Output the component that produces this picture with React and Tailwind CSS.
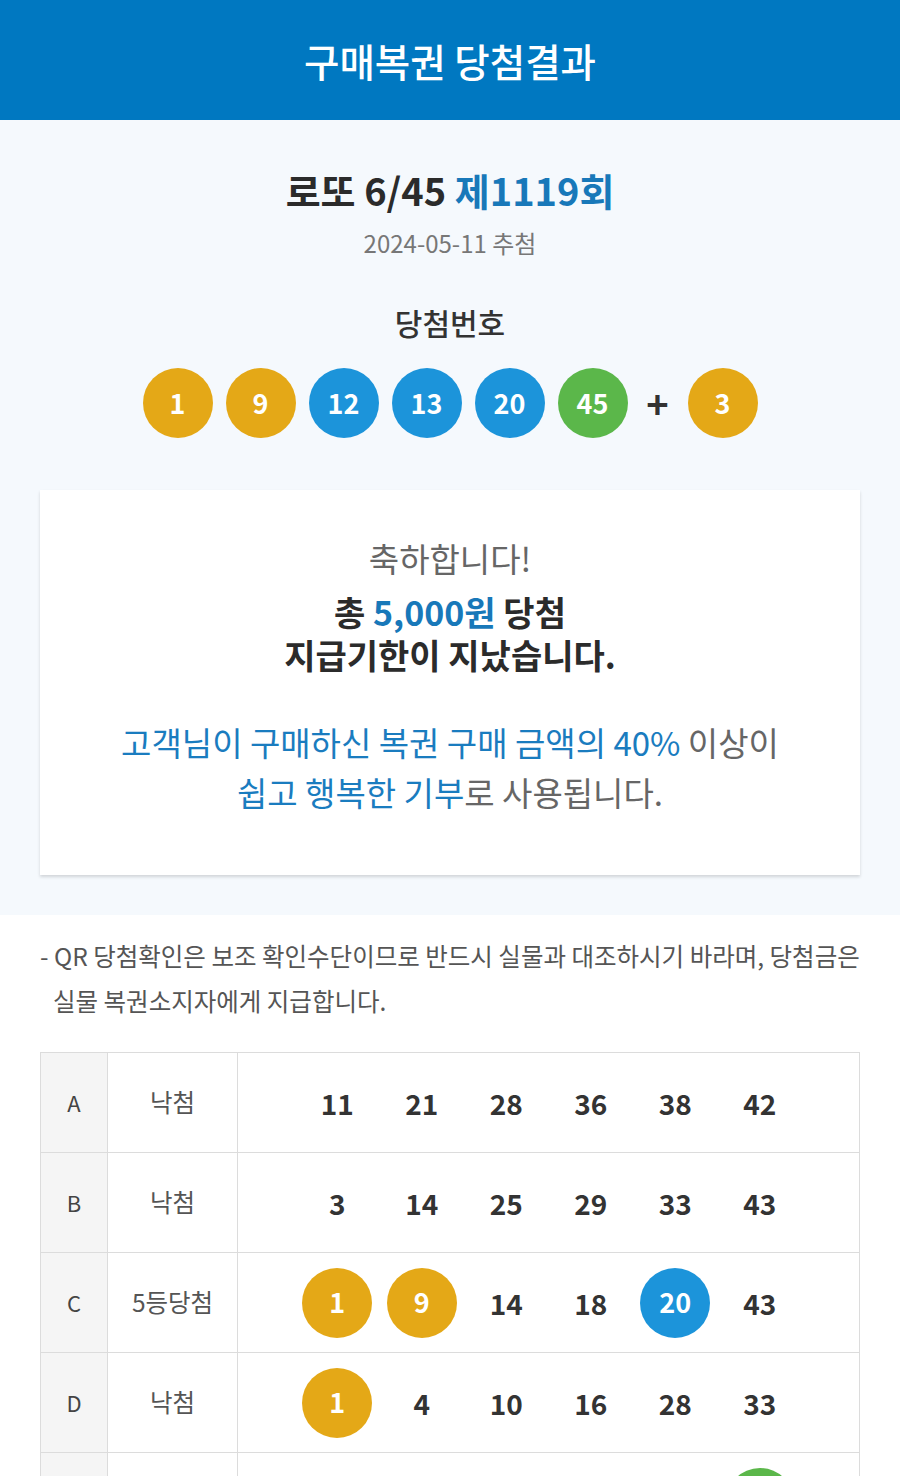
import React from 'react';

const FONT = { fontFamily: '"Noto Sans CJK KR", "Noto Sans", sans-serif' };

const ballColor = (n) => {
  if (n <= 10) return 'bg-[#e4a817]';
  if (n <= 20) return 'bg-[#1c94da]';
  if (n <= 30) return 'bg-[#e0525a]';
  if (n <= 40) return 'bg-[#9a9a9a]';
  return 'bg-[#5bb74a]';
};

const Ball = ({ n }) => (
  <span
    className={`flex h-[70px] w-[70px] items-center justify-center rounded-full text-[27px] font-bold text-white ${ballColor(n)}`}
  >
    {n}
  </span>
);

const winning = [1, 9, 12, 13, 20, 45];
const bonus = 3;

const games = [
  { label: 'A', result: '낙첨', nums: [11, 21, 28, 36, 38, 42] },
  { label: 'B', result: '낙첨', nums: [3, 14, 25, 29, 33, 43] },
  { label: 'C', result: '5등당첨', nums: [1, 9, 14, 18, 20, 43] },
  { label: 'D', result: '낙첨', nums: [1, 4, 10, 16, 28, 33] },
  { label: 'E', result: '낙첨', nums: [7, 15, 22, 31, 39, 45] },
];

export default function App() {
  return (
    <div className="w-[900px] bg-white" style={FONT}>
      <header className="flex h-[120px] items-center justify-center bg-[#0078c1]">
        <h1 className="text-[38.5px] font-medium leading-none text-white">구매복권 당첨결과</h1>
      </header>

      <section className="flex flex-col items-center bg-[#f5f9fd] px-10 pb-10 pt-[46px]">
        <h2 className="text-[38px] font-bold leading-[48px] text-[#2b2b2b]">
          로또 6/45 <span className="text-[#1878b9]">제1119회</span>
        </h2>
        <p className="mt-[13px] text-[24px] leading-[32px] text-[#777]">2024-05-11 추첨</p>

        <p className="mt-[45px] text-[30px] font-medium leading-[36px] text-[#333]">당첨번호</p>
        <div className="mt-[28px] flex items-center gap-[13px]">
          {winning.map((n) => (
            <Ball key={n} n={n} />
          ))}
          <span className="flex w-[34px] justify-center text-[38px] font-bold leading-none text-[#333]">+</span>
          <Ball n={bonus} />
        </div>

        <div className="mt-[52px] w-full bg-white pb-[58px] pt-[46px] text-center shadow-[0_2px_3px_rgba(0,0,0,0.15)]">
          <p className="text-[33px] leading-[44px] text-[#666]">축하합니다!</p>
          <div className="mt-[10px] text-[34px] font-bold leading-[43px] text-[#2b2b2b]">
            <p>
              총 <span className="text-[#1878b9]">5,000원</span> 당첨
            </p>
            <p>지급기한이 지났습니다.</p>
          </div>
          <p className="mt-[41px] text-[33px] leading-[50px] text-[#666]">
            <span className="text-[#1a7cbf]">고객님이 구매하신 복권 구매 금액의 40%</span> 이상이
            <br />
            <span className="text-[#1a7cbf]">쉽고 행복한 기부</span>로 사용됩니다.
          </p>
        </div>
      </section>

      <section className="px-10 pt-[18px]">
        <div className="text-[24.5px] leading-[45px] text-[#555]">
          <p className="whitespace-nowrap">- QR 당첨확인은 보조 확인수단이므로 반드시 실물과 대조하시기 바라며, 당첨금은</p>
          <p className="pl-[13px]">실물 복권소지자에게 지급합니다.</p>
        </div>

        <div className="mt-[29px] border-l border-r border-t border-[#dcdcdc]">
          {games.map((g) => (
            <div key={g.label} className="flex h-[100px] border-b border-[#dcdcdc]">
              <div className="flex w-[67px] items-center justify-center border-r border-[#dcdcdc] bg-[#f5f5f5] text-[22px] text-[#444]">
                {g.label}
              </div>
              <div className="flex w-[130px] items-center justify-center border-r border-[#dcdcdc] text-[24.5px] text-[#555]">
                {g.result}
              </div>
              <div className="grid flex-1 grid-cols-6 items-center px-[57px]">
                {g.nums.map((n, i) => (
                  <div key={i} className="flex justify-center">
                    {winning.includes(n) ? (
                      <Ball n={n} />
                    ) : (
                      <span className="text-[28px] font-bold text-[#333]">{n}</span>
                    )}
                  </div>
                ))}
              </div>
            </div>
          ))}
        </div>
      </section>
    </div>
  );
}
